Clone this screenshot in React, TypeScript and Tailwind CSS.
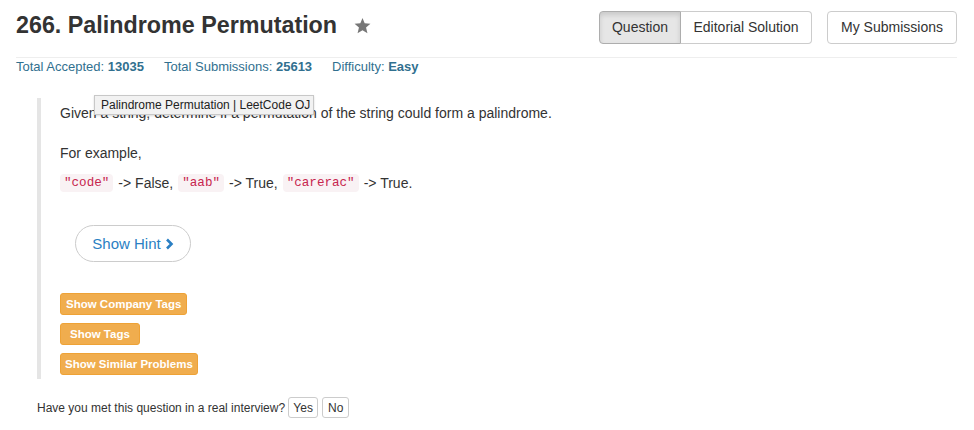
export default function App() {
    const font = "font-['Liberation_Sans',Arial,sans-serif]"

    return (
        <div className={`relative w-[974px] h-[430px] bg-white text-[#333] ${font}`}>
            {/* Header */}
            <div className="mx-[16px] mr-[17px] h-[58px] pt-[11px] flex items-start justify-between border-b border-[#eee]">
                <div className="flex items-center">
                    <h1 className="text-[23.3px] leading-[28px] font-bold text-[#333]">266. Palindrome Permutation</h1>
                    <svg className="ml-[17px] mt-[1px]" width="17" height="16" viewBox="0 0 24 23">
                        <polygon
                            points="12,0 15.1,7.6 23.4,8.3 17.1,13.7 19.1,21.8 12,17.5 4.9,21.8 6.9,13.7 0.6,8.3 8.9,7.6"
                            fill="#777"
                        />
                    </svg>
                </div>
                <div className="flex items-center gap-[15px] text-[14px]">
                    <div className="flex">
                        <button className="h-[33px] w-[82px] rounded-l-[4px] border border-[#adadad] bg-[#e6e6e6] shadow-[inset_0_3px_5px_rgba(0,0,0,0.125)] text-[#333]">
                            Question
                        </button>
                        <button className="h-[33px] w-[131px] rounded-r-[4px] border border-l-0 border-[#ccc] bg-white text-[#333]">
                            Editorial Solution
                        </button>
                    </div>
                    <button className="h-[33px] w-[130px] rounded-[4px] border border-[#ccc] bg-white text-[#333]">
                        My Submissions
                    </button>
                </div>
            </div>

            {/* Stats */}
            <div className="ml-[16px] flex gap-[20px] text-[13px] leading-[18px] text-[#31708f]">
                <span>Total Accepted: <b>13035</b></span>
                <span>Total Submissions: <b>25613</b></span>
                <span>Difficulty: <b>Easy</b></span>
            </div>

            <div className="ml-[37px] mt-[22px]">
                {/* Question body */}
                <div className="border-l-[4px] border-[#e5e5e5] pl-[19px] pt-[5px] pb-[4px] text-[14px] leading-[20px]">
                    <p>Given a string, determine if a permutation of the string could form a palindrome.</p>
                    <p className="mt-[20px]">For example,</p>
                    <p className="mt-[10px] flex items-center gap-[5px] whitespace-pre">
                        <code className="rounded-[4px] bg-[#f9f2f4] px-[4px] leading-[18px] text-[12.6px] text-[#c7254e] font-['Liberation_Mono',monospace]">"code"</code>
                        <span>-&gt; False,</span>
                        <code className="rounded-[4px] bg-[#f9f2f4] px-[4px] leading-[18px] text-[12.6px] text-[#c7254e] font-['Liberation_Mono',monospace]">"aab"</code>
                        <span>-&gt; True,</span>
                        <code className="rounded-[4px] bg-[#f9f2f4] px-[4px] leading-[18px] text-[12.6px] text-[#c7254e] font-['Liberation_Mono',monospace]">"carerac"</code>
                        <span>-&gt; True.</span>
                    </p>

                    <button className="mt-[32px] ml-[15px] h-[37px] w-[116px] rounded-full border border-[#ccc] bg-white flex items-center justify-center gap-[4px] text-[15px] text-[#2a7fc3]">
                        Show Hint
                        <svg width="9" height="12" viewBox="0 0 9 12">
                            <path d="M2 1.5 L6.5 6 L2 10.5" stroke="#2a7fc3" strokeWidth="2.6" fill="none" />
                        </svg>
                    </button>

                    <div className="mt-[31px] flex flex-col items-start gap-[8px] text-[11.5px] font-bold text-white">
                        <button className="h-[22px] rounded-[3px] border border-[#eea236] bg-[#f0ad4e] px-[5px]">Show Company Tags</button>
                        <button className="h-[22px] rounded-[3px] border border-[#eea236] bg-[#f0ad4e] px-[9px]">Show Tags</button>
                        <button className="h-[22px] rounded-[3px] border border-[#eea236] bg-[#f0ad4e] px-[4px]">Show Similar Problems</button>
                    </div>
                </div>

                {/* Interview */}
                <div className="mt-[18px] flex items-center gap-[4px] text-[12px]">
                    <span className="mr-[-1px]">Have you met this question in a real interview?</span>
                    <button className="h-[21px] w-[30px] rounded-[3px] border border-[#ccc] bg-white">Yes</button>
                    <button className="h-[21px] w-[27px] rounded-[3px] border border-[#ccc] bg-white">No</button>
                </div>
            </div>

            {/* Tooltip */}
            <div className="absolute left-[94px] top-[95px] h-[20px] w-[220px] whitespace-nowrap border border-[#c8c8c8] bg-[#f2f2f2] shadow-[0_1px_2px_rgba(0,0,0,0.15)] px-[6px] text-[12px] leading-[18px] text-[#222]">
                Palindrome Permutation | LeetCode OJ
            </div>
        </div>
    )
}
